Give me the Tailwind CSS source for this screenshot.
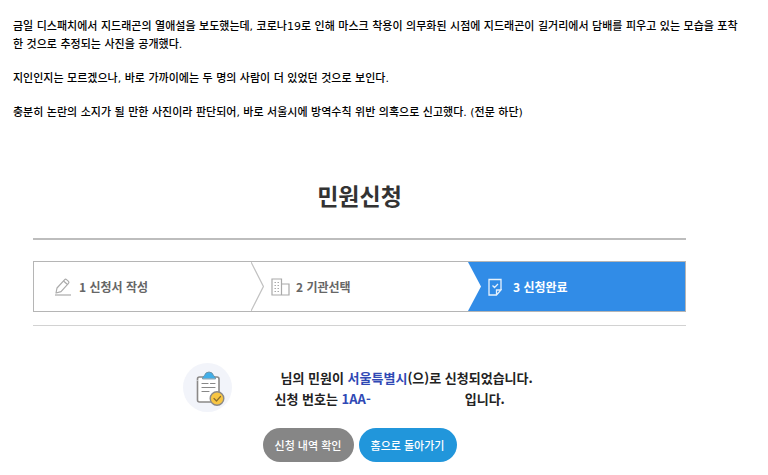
<!DOCTYPE html>
<html lang="ko">
<head>
    <meta charset="UTF-8">
    <meta name="viewport" content="width=device-width, initial-scale=1.0">
    <title>민원신청</title>
    <script src="https://cdn.jsdelivr.net/npm/@tailwindcss/browser@4"></script>
</head>
<body class="bg-white px-[13px] pt-[18px] font-['Noto_Sans_CJK_KR',sans-serif]">
    <article class="space-y-4 text-[11px] leading-[18px] font-medium text-black font-['DejaVu_Sans','Noto_Sans_CJK_KR',sans-serif]">
        <p>금일 디스패치에서 지드래곤의 열애설을 보도했는데, 코로나19로 인해 마스크 착용이 의무화된 시점에 지드래곤이 길거리에서 담배를 피우고 있는 모습을 포착<br>한 것으로 추정되는 사진을 공개했다.</p>
        <p>지인인지는 모르겠으나, 바로 가까이에는 두 명의 사람이 더 있었던 것으로 보인다.</p>
        <p>충분히 논란의 소지가 될 만한 사진이라 판단되어, 바로 서울시에 방역수칙 위반 의혹으로 신고했다. (전문 하단)</p>
    </article>

    <section class="mt-[55px] max-w-[693px] px-5">
        <h1 class="text-center text-[23px] leading-9 font-bold text-[#333]">민원신청</h1>

        <div class="mt-[25px] border-y border-t-2 border-t-[#bdbdbd] border-b-[#d2d2d2] pt-[21px] pb-[13px]">
            <!-- steps -->
            <ol class="grid h-[51px] grid-cols-3 border border-[#b5b5b5] text-[12px] font-bold text-[#666]">
                <li class="flex items-center gap-[7px] pl-[18px]">
                    <svg class="h-5 w-5" viewBox="0 0 20 20" fill="none" stroke="#aaa" stroke-width="1.2" stroke-linejoin="round">
                        <path d="M3 18H19"/>
                        <path d="M4 16L5 11L12.500 2.800Q13.500 1.800 14.500 2.600L16.500 4.400Q17.400 5.300 16.500 6.400L9 14.600L4 16Z"/>
                        <path d="M11.500 4L15.500 7.500"/>
                    </svg>
                    <span>1 신청서 작성</span>
                </li>
                <li class="flex items-center">
                    <svg class="h-full w-[13px]" viewBox="0 0 13 49" preserveAspectRatio="none" fill="none" stroke="#c2c2c2" stroke-width="1.2">
                        <path d="M0 0L12.400 24.500L0 49"/>
                    </svg>
                    <svg class="mr-1.5 ml-[7px] h-5 w-[19px]" viewBox="0 0 19 20" fill="none" stroke="#aaa" stroke-width="1.2">
                        <path d="M1 2H10.500V18H1ZM10.500 7H18V18H10.500"/>
                        <path d="M3.500 5.500H8.500M3.500 8.500H8.500M3.500 11.500H8.500M3.500 14.500H8.500" stroke-dasharray="1.500 1.500"/>
                    </svg>
                    <span>2 기관선택</span>
                </li>
                <li class="flex items-center bg-[#318ce7] text-white">
                    <svg class="h-full w-[13px]" viewBox="0 0 13 49" preserveAspectRatio="none">
                        <path d="M0 0L13 24.500L0 49Z" fill="#fff"/>
                    </svg>
                    <svg class="mr-[11px] ml-[7px] h-[18px] w-[14px]" viewBox="0 0 14 18" fill="none" stroke="#e6f1fc" stroke-width="1.3">
                        <path d="M13 11.500V1.500H1V17H8.500L13 12H8.500V17M4.500 7.500L6.500 9.500L10 6"/>
                    </svg>
                    <span>3 신청완료</span>
                </li>
            </ol>
        </div>

        <!-- result -->
        <div class="mt-[37px] flex items-center justify-center gap-[43px]">
            <svg class="h-[49px] w-[49px]" viewBox="0 0 49 49" fill="none" stroke-linecap="round" stroke-linejoin="round">
                <circle cx="24.500" cy="24.500" r="24.500" fill="#f2f4fa"/>
                <rect x="14.500" y="14" width="21.500" height="25" rx="2" fill="#fff" stroke="#8b8988" stroke-width="1.600"/>
                <path d="M14.500 17V20.500" stroke="#f2f4fa" stroke-width="2" stroke-dasharray="0.500 3" stroke-linecap="butt"/>
                <path d="M19.500 15.500Q19.500 13.500 21.500 12.500Q22.500 9 26 9Q29.500 9 30.500 12.500Q32.500 13.500 32.500 15.500Z" fill="#41aee8" stroke="#6f93a6"/>
                <path d="M19 20.500H25M27.500 20.500H32M19 24.500H32M19 28.500H26" stroke="#888" stroke-width="1.200"/>
                <circle cx="34" cy="35.500" r="6.800" fill="#f8c643" stroke="#8b8988" stroke-width="1.400"/>
                <path d="M31 35.500L33.500 38L37.500 33.500" stroke="#8b6c2c" stroke-width="1.200"/>
            </svg>
            <p class="w-[262px] text-[13px] leading-[21px] font-bold text-[#222]">
                <span class="inline-block w-1.5"></span>님의 민원이 <span class="text-[#3049b5]">서울특별시</span>(으)로 신청되었습니다.<br>
                신청 번호는 <span class="text-[#3049b5]">1AA-</span><span class="inline-block w-[94px]"></span>입니다.
            </p>
        </div>

        <div class="mt-4 flex justify-center gap-[5px] text-[11px] font-medium text-white">
            <button type="button" class="h-[34px] w-[91px] rounded-full bg-[#868686]">신청 내역 확인</button>
            <button type="button" class="h-[34px] w-[98px] rounded-full bg-[#2196db]">홈으로 돌아가기</button>
        </div>
    </section>
</body>
</html>
